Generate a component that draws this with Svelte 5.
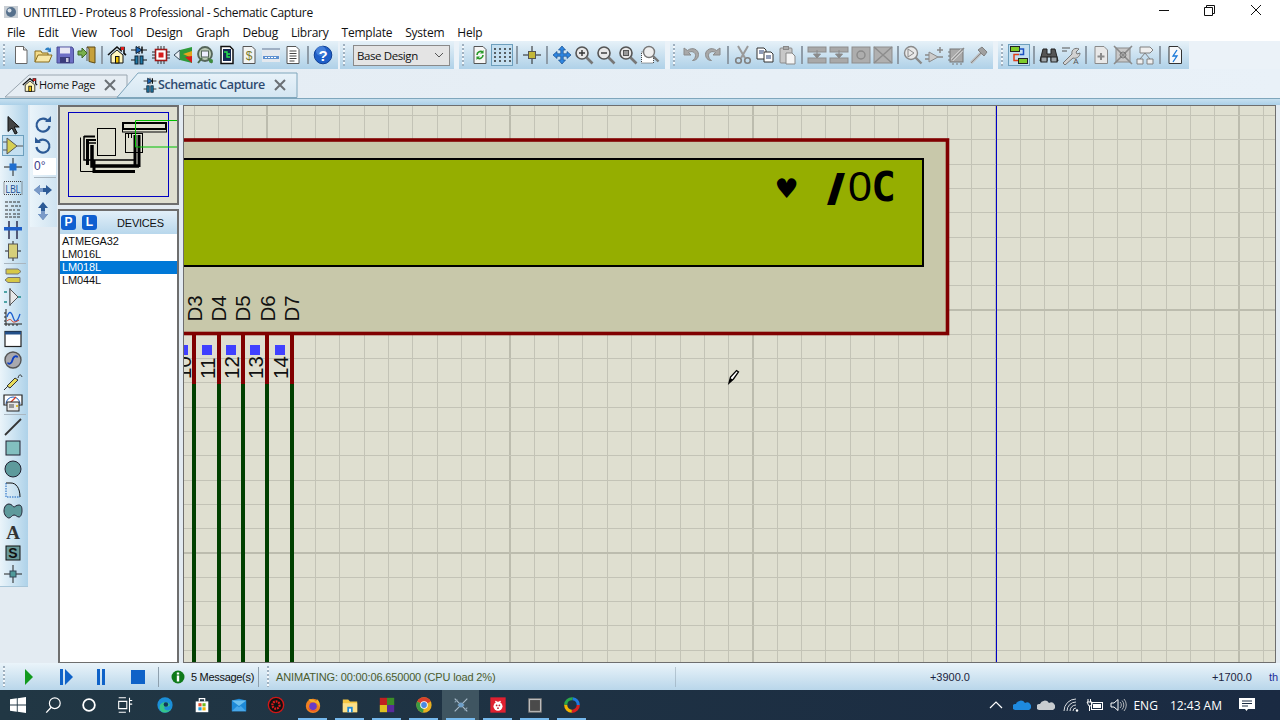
<script lang="ts">
  const ICONS: Record<string, string> = {
    new: `<path d="M4.5 1.5h8l3.5 3.5v13.5H4.5z" fill="#fff" stroke="#666"/><path d="M12.5 1.5v3.5H16" fill="#ddd" stroke="#666"/>`,
    open: `<path d="M2 17V6h6l1 2h6v3" fill="#f4dc8a" stroke="#8a6d1d"/><path d="M2 17l3-7h14l-3 7z" fill="#f8e8a8" stroke="#8a6d1d"/><path d="M12 5c1-3 4-3 5-1l1-2v5h-4l2-1c-1-1-3-1-4-1z" fill="#2d7fc4"/>`,
    save: `<path d="M2 2h15l1.500 2v14H2z" fill="#6d6fc4" stroke="#4b4d94"/><rect x="5" y="2.500" width="10" height="6" fill="#e8e8f4"/><rect x="5" y="12" width="10" height="6" fill="#3b3d7c"/><rect x="11" y="13" width="2.500" height="4" fill="#c9c9e0"/>`,
    import: `<path d="M10 2h8v16l-6-1.500V3.500z" fill="#c6a13c" stroke="#5c4a16"/><path d="M10 2v14" stroke="#555"/><path d="M1 6h4V3l5 5-5 5v-3H1z" fill="#79b04d" stroke="#3f6a25"/>`,
    home: `<path d="M1 10L10 2l4 3.500V2.500h3v6L19 10" fill="none" stroke="#111" stroke-width="1.600"/><rect x="14" y="2" width="3" height="3" fill="#e02020"/><path d="M4 10l6-5 6 5v8H4z" fill="#fff6c0" stroke="#111"/><rect x="8.500" y="11.500" width="3.500" height="6.500" fill="#f2c200" stroke="#111"/>`,
    schem: `<path d="M2 5h5M13 5h5M10 1v8" stroke="#111" fill="none"/><path d="M7 1.500v7l6-3.500z" fill="#1b66b8" stroke="#123"/><path d="M13 1.500v7" stroke="#111" stroke-width="1.500"/><path d="M2 15h4M14 15h4" stroke="#111"/><rect x="6" y="11" width="3" height="8" fill="#1f7aa8" stroke="#123"/><rect x="11" y="11" width="3" height="8" fill="#1f7aa8" stroke="#123"/>`,
    pcb: `<rect x="4.500" y="4.500" width="11" height="11" fill="#fff" stroke="#a11818" stroke-width="1.600"/><rect x="7.500" y="7.500" width="5" height="5" fill="#d81c1c"/><path d="M1 7h3M1 10h3M1 13h3M16 7h3M16 10h3M16 13h3M7 1v3M10 1v3M13 1v3M7 16v3M10 16v3M13 16v3" stroke="#333"/>`,
    view3d: `<path d="M1 10l6-5v10z" fill="#e8eef4" stroke="#3a4d5c"/><path d="M7 5l12-3v16l-12-3z" fill="#2f9a3a"/><path d="M10 9l9-3v7z" fill="#e6a51e"/><path d="M12 12l7-1v7z" fill="#d81c1c"/>`,
    gerber: `<circle cx="10" cy="9" r="7" fill="#b9c9b4" stroke="#55655a" stroke-width="1.800"/><rect x="6.500" y="6" width="7" height="6" fill="#eef" stroke="#55655a"/><path d="M3 18l4-5M17 18l-4-5" stroke="#4a6a4a" stroke-width="2"/><circle cx="16" cy="16" r="2" fill="#3d8c3d"/>`,
    bom: `<path d="M4 1.500h9l3 3v14H4z" fill="#fff" stroke="#111" stroke-width="1.500"/><rect x="6" y="4" width="8" height="12" fill="#152a52"/><path d="M7 7h3v5h3M10 9h3" fill="none" stroke="#27e34a" stroke-width="1.400"/>`,
    dollar: `<path d="M4 1.500h9l3 3v14H4z" fill="#f2f4f4" stroke="#555"/><text x="10" y="15" font-size="12" font-family="Liberation Sans" text-anchor="middle" fill="#7a7a2a">$</text>`,
    explorer: `<rect x="1" y="3" width="18" height="14" fill="#e4e8ee"/><rect x="1" y="3" width="18" height="2" fill="#9fb0c4"/><rect x="2" y="11" width="16" height="3" fill="#5f90d0"/><path d="M4 12.500h12" stroke="#fff" stroke-dasharray="2 1"/>`,
    notes: `<path d="M4 1.500h9l3 3v14H4z" fill="#fff" stroke="#555"/><path d="M6.500 6h7M6.500 8.500h7M6.500 11h7M6.500 13.500h7M6.500 16h5" stroke="#444"/>`,
    help: `<circle cx="10" cy="10" r="8.800" fill="#1f5fc8" stroke="#0f3f94"/><circle cx="8" cy="6" r="5" fill="#5f95e4" opacity=".6"/><text x="10" y="15.500" text-anchor="middle" font-size="15" font-weight="700" font-family="Liberation Sans" fill="#fff">?</text>`,
    refresh: `<path d="M4 1.500h9l3 3v14H4z" fill="#f6f6f6" stroke="#555"/><path d="M7 10a3.500 3.500 0 0 1 6-2.500M13 10a3.500 3.500 0 0 1-6 2.500" fill="none" stroke="#2a9a2a" stroke-width="1.600"/><path d="M13.500 5v3.500H10zM6.500 15v-3.500H10z" fill="#2a9a2a"/>`,
    grid: `<g fill="#222"><circle cx="3" cy="4" r=".9"/><circle cx="8" cy="4" r=".9"/><circle cx="13" cy="4" r=".9"/><circle cx="18" cy="4" r=".9"/><circle cx="3" cy="8" r=".9"/><circle cx="8" cy="8" r=".9"/><circle cx="13" cy="8" r=".9"/><circle cx="18" cy="8" r=".9"/><circle cx="3" cy="12" r=".9"/><circle cx="8" cy="12" r=".9"/><circle cx="13" cy="12" r=".9"/><circle cx="18" cy="12" r=".9"/><circle cx="3" cy="16" r=".9"/><circle cx="8" cy="16" r=".9"/><circle cx="13" cy="16" r=".9"/><circle cx="18" cy="16" r=".9"/></g>`,
    origin: `<path d="M10 1v18M1 10h18" stroke="#222"/><rect x="6.500" y="6.500" width="7" height="7" fill="#c4b83a" stroke="#555"/>`,
    move: `<path d="M10 1l3.500 4H11.200v3.800H15V6.500l4 3.500-4 3.500v-2.300h-3.800V15h2.300L10 19l-3.500-4h2.300v-3.800H5v2.300L1 10l4-3.500v2.300h3.800V5H6.500z" fill="#2f86e0" stroke="#144c8c" stroke-width=".7"/>`,
    zoomIn: `<circle cx="8" cy="8" r="6" fill="#e8e8e8" stroke="#555" stroke-width="1.600"/><path d="M5 8h6M8 5v6" stroke="#333" stroke-width="1.400"/><path d="M12.500 12.500l6 6" stroke="#777" stroke-width="2.600"/>`,
    zoomOut: `<circle cx="8" cy="8" r="6" fill="#e8e8e8" stroke="#555" stroke-width="1.600"/><path d="M5 8h6" stroke="#333" stroke-width="1.400"/><path d="M12.500 12.500l6 6" stroke="#777" stroke-width="2.600"/>`,
    zoomFit: `<circle cx="8" cy="8" r="6" fill="#e8e8e8" stroke="#555" stroke-width="1.600"/><rect x="5.500" y="5.500" width="5" height="5" fill="#999" stroke="#555"/><path d="M12.500 12.500l6 6" stroke="#777" stroke-width="2.600"/>`,
    zoomArea: `<rect x="1.500" y="7" width="12" height="11" fill="#fff" stroke="#444" stroke-dasharray="1 1"/><circle cx="9" cy="7" r="5.500" fill="#eee" stroke="#777" stroke-width="1.400"/><path d="M13 11l5.500 5.500" stroke="#777" stroke-width="2.400"/>`,
    undo: `<path d="M3 3v7h7l-2.500-2.500c3-2 7-.5 7 3 0 2-1 4-3 5 4 0 6-3 6-6 0-5-6-8-11-4z" fill="#a8a8a8" stroke="#8a8a8a"/>`,
    redo: `<path d="M17 3v7h-7l2.500-2.500c-3-2-7-.5-7 3 0 2 1 4 3 5-4 0-6-3-6-6 0-5 6-8 11-4z" fill="#a8a8a8" stroke="#8a8a8a"/>`,
    cut: `<path d="M5 1l7 12M15 1L8 13" stroke="#9a9a9a" stroke-width="2"/><circle cx="5.500" cy="15.500" r="2.800" fill="none" stroke="#808080" stroke-width="1.600"/><circle cx="14.500" cy="15.500" r="2.800" fill="none" stroke="#808080" stroke-width="1.600"/>`,
    copy: `<path d="M2 3h7l2 2v9H2z" fill="#fff" stroke="#333"/><path d="M9 7h7l2 2v8H9z" fill="#fff" stroke="#333"/><path d="M4 6h5M4 8h4M11 11h5M11 13h5" stroke="#223a70"/>`,
    paste: `<rect x="3" y="3" width="12" height="15" rx="1" fill="#c8c8c8" stroke="#8a8a8a"/><rect x="6.500" y="1.500" width="5" height="3" fill="#aaa" stroke="#888"/><path d="M9 8h6l3 3v8H9z" fill="#f4f4f4" stroke="#888"/>`,
    blockA: `<rect x="1" y="2" width="18" height="5" fill="#a9a9a9" stroke="#8d8d8d"/><rect x="1" y="13" width="18" height="5" fill="#a9a9a9" stroke="#8d8d8d"/><path d="M10 5v7M6.500 9l3.500 4 3.500-4z" fill="#8a8a8a" stroke="#8a8a8a"/>`,
    blockB: `<rect x="1" y="2" width="18" height="16" fill="#adadad" stroke="#8d8d8d"/><circle cx="10" cy="10" r="4" fill="none" stroke="#8a8a8a" stroke-width="1.400"/>`,
    blockC: `<rect x="1" y="2" width="18" height="16" fill="#b0b0b0" stroke="#8d8d8d"/><path d="M1 2l18 16M19 2L1 18" stroke="#8d8d8d" stroke-width="1.500"/>`,
    probe: `<circle cx="8" cy="8" r="6.500" fill="#e9e9e9" stroke="#8a8a8a" stroke-width="1.400"/><path d="M5 4v8l6-4z" fill="none" stroke="#8a8a8a"/><path d="M12.500 12.500l6 6" stroke="#8a8a8a" stroke-width="2.400"/>`,
    addAmp: `<path d="M4 7v10l9-5z" fill="#ccc" stroke="#8a8a8a"/><path d="M0 10h4M0 14h4M13 12h5M15 2v6M12 5h6" stroke="#8a8a8a" stroke-width="1.500"/>`,
    chipKey: `<rect x="3" y="4" width="13" height="13" fill="#aaa" stroke="#777"/><path d="M1 7h2M1 11h2M1 15h2M6 18v2M10 18v2M14 18v2" stroke="#777"/><path d="M5 15L15 5" stroke="#e8e8e8" stroke-width="3"/><path d="M5 15L17 3" stroke="#8a8a8a" stroke-width="1.400"/>`,
    hammer: `<path d="M2 18L12 8" stroke="#bbb" stroke-width="3"/><path d="M2 18L12 8" stroke="#8a8a8a" stroke-width="1"/><path d="M9 5l4-3 5 5-3 4z" fill="#a0a0a0" stroke="#808080"/>`,
    hier: `<rect x="1.500" y="1.500" width="9" height="5" fill="#7ecb2a" stroke="#222"/><rect x="9.500" y="13.500" width="9" height="5" fill="#7ecb2a" stroke="#222"/><path d="M10.500 4h4v5.500h-4" fill="none" stroke="#1b50c0" stroke-width="1.500"/><path d="M10 9.500H5v6h4" fill="none" stroke="#e0401a" stroke-width="1.500"/>`,
    binoc: `<path d="M4 4h4v5h4V4h4l3 12h-7v-4H8v4H1z" fill="#555" stroke="#222"/><rect x="2" y="12" width="6" height="5" fill="#9ca3a8" stroke="#222"/><rect x="12" y="12" width="6" height="5" fill="#9ca3a8" stroke="#222"/>`,
    wrench: `<path d="M2 18l9-9c-1-4 3-7 7-5l-3 3 1 2 3-1c0 4-4 6-7 5l-8 7z" fill="#d2d2d2" stroke="#777"/><path d="M1 3h8M1 6h5" stroke="#555"/><text x="15" y="19" font-size="8" text-anchor="middle" font-family="Liberation Sans" fill="#555">A</text>`,
    addSheet: `<path d="M4 1.500h9l3.500 3.500v13.500H4z" fill="#e8e8e8" stroke="#8a8a8a"/><path d="M10 8v7M6.500 11.500h7" stroke="#8a8a8a" stroke-width="2"/>`,
    delSheet: `<rect x="3" y="3" width="14" height="14" fill="#c8c8c8" stroke="#8a8a8a"/><path d="M1 1l18 18M19 1L1 19" stroke="#8a8a8a" stroke-width="1.600"/><circle cx="10" cy="10" r="3" fill="none" stroke="#777"/>`,
    tree: `<path d="M5 2h10l3 3-3 3H5zM2 14h6v5H2zM12 14h6v5h-6z" fill="#eee" stroke="#808080"/><path d="M10 8l-5 6M10 8l5 6" stroke="#808080"/>`,
    sheetBolt: `<path d="M4 1.500h9l3.500 3.500v13.500H4z" fill="#f6f8fa" stroke="#333"/><path d="M12 5l-4 6h4l-4 6" fill="none" stroke="#1878d8" stroke-width="1.300"/>`,
    select: `<path d="M5 1.500v15l4-3.500 3 6 2.200-1-3-6h5z" fill="#444" stroke="#111"/>`,
    comp: `<path d="M0 6h4M0 14h4M14 10h6" stroke="#555"/><path d="M4 2v16l10-8z" fill="#d6cf52" stroke="#555"/>`,
    junction: `<path d="M10 1v18M1 10h18" stroke="#222"/><rect x="6.500" y="6.500" width="7" height="7" fill="#1f6fd0"/>`,
    lbl: `<rect x="1" y="3.500" width="18" height="13" fill="none" stroke="#444" stroke-dasharray="1 1"/><text x="10" y="14.500" text-anchor="middle" font-size="10.500" font-family="Liberation Sans" fill="#1c4e94" textLength="15" lengthAdjust="spacingAndGlyphs">LBL</text>`,
    script: `<path d="M2 3h16M2 7h4M8 7h10M2 11h10M14 11h4M2 15h6M10 15h8M2 18h16" stroke="#333" stroke-dasharray="3 1"/>`,
    bus: `<path d="M6 1v18M14 1v18" stroke="#224" stroke-width="1.400"/><rect x="1" y="7" width="18" height="3.500" fill="#1f5fc8"/>`,
    sub: `<path d="M10 0v3M10 17v3M2 10h3M15 10h3" stroke="#222"/><rect x="5.500" y="3" width="9" height="14" fill="#d6cf7a" stroke="#555"/>`,
    terminal: `<path d="M3 3h12l3 2.500-3 2.500H3zM2 14l3-2.500h12v5H5z" fill="#d6c846" stroke="#777"/>`,
    port: `<path d="M1 5h3M1 15h3M15 10h3" stroke="#1e8a8a" stroke-width="1.500"/><path d="M7 1v18" stroke="#444"/><path d="M7 2l8 8-8 8z" fill="#e8e8e8" stroke="#555"/>`,
    graph: `<path d="M3 1v17M1 16h18M1 5h2M1 9h2M1 13h2M6 16v2M10 16v2M14 16v2" stroke="#222"/><path d="M4 9c2-6 4-6 6 0s4 6 7-3" fill="none" stroke="#1f60d0" stroke-width="1.300"/><path d="M4 13c2-2 4-2 5 0s4 1 7-1" fill="none" stroke="#d83a20"/>`,
    tape: `<rect x="2" y="2.500" width="16" height="15" fill="#fff" stroke="#222" stroke-width="1.200"/><rect x="2" y="2.500" width="16" height="3" fill="#23508a"/>`,
    gen: `<circle cx="10" cy="10" r="8" fill="#a9a9ae" stroke="#555" stroke-width="1.400"/><path d="M5 12.500c0 2 3.500 2 4.500-2.500s4.500-4.500 5-2.500" fill="none" stroke="#1040c0" stroke-width="1.800"/>`,
    vprobe: `<path d="M1 19l4-4" stroke="#333"/><path d="M4 15l8-8 3 2-8 8z" fill="#e8dc5a" stroke="#333"/><path d="M15 7c1-4 3-4 4-1" fill="none" stroke="#333"/>`,
    meter: `<path d="M1 3h18v10H1z" fill="#fff" stroke="#222" stroke-width="1.200"/><path d="M3 12a7 7 0 0 1 14 0" fill="none" stroke="#2060c0"/><path d="M6 12l7-7" stroke="#d83a20" stroke-width="1.200"/><rect x="4" y="10" width="12" height="9" fill="#e8e8e8" stroke="#222"/><path d="M6 13h5M6 15h5" stroke="#444"/><circle cx="14" cy="14" r="1" fill="#d8b000"/>`,
    line: `<path d="M2 18L18 2" stroke="#333" stroke-width="1.800"/>`,
    box: `<rect x="3" y="3" width="14" height="14" fill="#82bfbf" stroke="#223"/>`,
    circle: `<circle cx="10" cy="10" r="8" fill="#5e9a9c" stroke="#223"/>`,
    arc: `<path d="M3 3h5c5 0 9 5 9 14" fill="none" stroke="#111"/><path d="M3 3v14h14" fill="none" stroke="#1060c0" stroke-dasharray="1.500 1"/>`,
    path2d: `<path d="M6 3c3 0 4 3 5 3s2-2 5-2 3 4 3 6-1 6-3 6-3-2-5-2-3 3-5 3-5-3-5-7 2-7 5-7z" fill="#5e9a9c" stroke="#223"/>`,
    textA: `<text x="10" y="17" text-anchor="middle" font-size="19" font-weight="700" font-family="Liberation Serif" fill="#333">A</text>`,
    symbol: `<rect x="3" y="3" width="14" height="14" fill="#6a9a9a" stroke="#111"/><text x="10" y="15" text-anchor="middle" font-size="14" font-weight="700" font-family="Liberation Sans" fill="#111">S</text>`,
    marker: `<path d="M10 1v18M1 10h18" stroke="#222"/><rect x="7" y="7" width="6" height="6" fill="#4f9a9a" stroke="#345"/>`,
    rotCw: `<path d="M15.500 6.500A6.500 6.500 0 1 0 16.500 11" fill="none" stroke="#2c5a96" stroke-width="2.200"/><path d="M12 7h6V1z" fill="#2c5a96"/>`,
    rotCcw: `<path d="M4.500 6.500A6.500 6.500 0 1 1 3.500 11" fill="none" stroke="#2c5a96" stroke-width="2.200"/><path d="M8 7H2V1z" fill="#2c5a96"/>`,
    flipH: `<path d="M1 10l6-5v3h6V5l6 5-6 5v-3H7v3z" fill="#2c5a96"/><path d="M1 10l6-5v3h3v4H7v3z" fill="#7a9ac8"/>`,
    flipV: `<path d="M10 1l5 6h-3v6h3l-5 6-5-6h3V7H5z" fill="#2c5a96"/><path d="M10 19l-5-6h3v-3h4v3h3z" fill="#7a9ac8"/>`,
  };

  type Item = { i?: string; sep?: boolean; on?: boolean };
  const bar = (names: string) =>
    names.split(" ").map((n): Item =>
      n === "|" ? { sep: true } : n.endsWith("!") ? { i: n.slice(0, -1), on: true } : { i: n }
    );

  const topBars = [
    { cls: "g1", items: bar("new open save import | home schem pcb view3d gerber bom dollar explorer notes | help") },
    { cls: "g3", items: bar("refresh grid! | origin | move zoomIn zoomOut zoomFit zoomArea") },
    { cls: "g4", items: bar("undo redo | cut copy paste | blockA blockA blockB blockC | probe addAmp chipKey hammer") },
    { cls: "g5", items: bar("hier! | binoc wrench | addSheet delSheet tree | sheetBolt") },
  ];

  const menus = ["File", "Edit", "View", "Tool", "Design", "Graph", "Debug", "Library", "Template", "System", "Help"];
  const modes = bar("select comp! junction lbl script bus sub | terminal port graph tape gen vprobe meter | line box circle arc path2d textA symbol marker");
  const devices = ["ATMEGA32", "LM016L", "LM018L", "LM044L"];

  // grid of the editing window, screen coordinates
  const STEP = 24.3;
  const vLines = Array.from({ length: 46 }, (_, k) => 996 + (k - 33) * STEP).filter((x) => x > 184 && x < 1276);
  const hLines = Array.from({ length: 24 }, (_, k) => 310 + (k - 8) * STEP).filter((y) => y > 105 && y < 662);
  const isMajorV = (x: number) => Math.abs(((x - 996) / STEP) % 10) < 0.01;
  const isMajorH = (y: number) => Math.abs(((y - 310) / STEP) % 10) < 0.01;
  // 1px lines sit on a pixel centre, the 2px major ones on a pixel edge
  const snap = (v: number, major: boolean) => (major ? Math.round(v) : Math.floor(v) + 0.5);

  const pins = [194, 219, 243, 267, 292];
  const labels = [
    { t: "D3", x: 201.5 }, { t: "D4", x: 226 }, { t: "D5", x: 250 }, { t: "D6", x: 275 }, { t: "D7", x: 299 },
  ];
  const numbers = [
    { t: "10", x: 191 }, { t: "11", x: 215 }, { t: "12", x: 239 }, { t: "13", x: 263 }, { t: "14", x: 288 },
  ];
  const squares = [178, 202, 226, 250, 275];

  const taskIcons = [
    { x: "edge" }, { x: "store" }, { x: "mail" }, { x: "redc" }, { x: "fox", run: true }, { x: "files", run: true },
    { x: "cube", run: true }, { x: "chrome", run: true }, { x: "proteus", run: true, active: true },
    { x: "rasp", run: true }, { x: "tablet", run: true }, { x: "ring", run: true },
  ];
  const TASK: Record<string, string> = {
    edge: `<circle cx="10" cy="10" r="8.500" fill="#1b8fd8"/><path d="M4 12c0-5 8-7 11-3 1 2-1 3-4 3-3 0-2 4 2 4 2 0 3-1 4-2-2 5-9 6-12 2-1-1-1-3-1-4z" fill="#36c58a"/><circle cx="11" cy="9.500" r="2.500" fill="#12365c"/>`,
    store: `<path d="M3 6h14v12H3z" fill="#fff"/><path d="M7 6V3h6v3" fill="none" stroke="#fff" stroke-width="1.300"/><rect x="6" y="8" width="3.500" height="3.500" fill="#e8502a"/><rect x="10.500" y="8" width="3.500" height="3.500" fill="#70b820"/><rect x="6" y="12.500" width="3.500" height="3.500" fill="#1ea0e0"/><rect x="10.500" y="12.500" width="3.500" height="3.500" fill="#f4b400"/>`,
    mail: `<path d="M2 5l8-2 8 2v12H2z" fill="#1e8ad8"/><path d="M2 5l8 6 8-6" fill="#6cc0f0"/><path d="M2 17l6-6 2 1.500 2-1.500 6 6z" fill="#48a8ea"/>`,
    redc: `<circle cx="10" cy="10" r="8.500" fill="#111" stroke="#d01818" stroke-width="1.500"/><circle cx="10" cy="10" r="4" fill="none" stroke="#e01a1a" stroke-width="2.500" stroke-dasharray="2 1"/>`,
    fox: `<circle cx="10" cy="11" r="8" fill="#f08020"/><path d="M5 4c2 2 2 3 5 3 4 0 7 3 7 6 1-4 0-8-3-10 1 2 0 3-1 3-2-2-5-3-8-2z" fill="#f5b52a"/><circle cx="10" cy="11.500" r="4.200" fill="#6a3cc8"/><path d="M4 12c1 5 8 7 11 3-4 2-9 1-11-3z" fill="#e8442a"/>`,
    files: `<path d="M2 4h6l2 2h8v12H2z" fill="#f4c542"/><rect x="2" y="8" width="16" height="10" fill="#fbe08a"/><rect x="7" y="12" width="6" height="6" fill="#1e8ad8"/><rect x="9" y="14" width="2" height="4" fill="#fff"/>`,
    cube: `<rect x="2" y="2" width="8" height="8" fill="#c02020"/><rect x="10" y="2" width="8" height="8" fill="#3c8c28"/><rect x="2" y="10" width="8" height="8" fill="#e0c020"/><rect x="10" y="10" width="8" height="8" fill="#5a2a9a"/>`,
    chrome: `<circle cx="10" cy="10" r="8.500" fill="#e8b020"/><path d="M10 10L2.500 6A8.500 8.500 0 0 1 17.500 6z" fill="#d8402c"/><path d="M10 10l-7.500-4A8.500 8.500 0 0 0 9 18.500z" fill="#3a9a44"/><circle cx="10" cy="10" r="4.200" fill="#fff"/><circle cx="10" cy="10" r="3.200" fill="#4a88e0"/>`,
    proteus: `<path d="M3 3l14 14M17 3L3 17" stroke="#a9bccb" stroke-width="1.300"/><path d="M6 10l4-3 4 3-4 3z" fill="#6f9fc8"/><path d="M3 7l3-3M14 16l3-3" stroke="#8ba2b4" stroke-width="1.300"/>`,
    rasp: `<rect x="1.500" y="1.500" width="17" height="17" fill="#e02030"/><circle cx="10" cy="11.500" r="5" fill="#fff"/><circle cx="8.500" cy="10.500" r="1" fill="#c02030"/><circle cx="11.500" cy="10.500" r="1" fill="#c02030"/><circle cx="10" cy="13.500" r="1" fill="#c02030"/><path d="M7 6l3 1.500L13 6" stroke="#fff" stroke-width="1.500" fill="none"/>`,
    tablet: `<rect x="3" y="3" width="14" height="15" fill="#c8c8c8" stroke="#777"/><rect x="4.500" y="4.500" width="11" height="12" fill="#4a4a4a"/>`,
    ring: `<circle cx="10" cy="10" r="7" fill="none" stroke="#d82020" stroke-width="3.500" stroke-dasharray="11 33" stroke-dashoffset="0"/><circle cx="10" cy="10" r="7" fill="none" stroke="#f4b400" stroke-width="3.500" stroke-dasharray="11 33" stroke-dashoffset="-11"/><circle cx="10" cy="10" r="7" fill="none" stroke="#2aa84a" stroke-width="3.500" stroke-dasharray="11 33" stroke-dashoffset="-22"/><circle cx="10" cy="10" r="7" fill="none" stroke="#1f7ae0" stroke-width="3.500" stroke-dasharray="11 33" stroke-dashoffset="-33"/>`,
  };
</script>

<div class="shell">
  <header class="titlebar">
    <svg class="app-logo" viewBox="0 0 16 16"><rect x="1" y="2" width="14" height="12" fill="#c8ced4" /><circle cx="8" cy="8" r="5" fill="#56708c" /><circle cx="6.500" cy="6.500" r="2" fill="#d8e0e8" /></svg>
    <span class="title">UNTITLED - Proteus 8 Professional - Schematic Capture</span>
    <div class="win-btns">
      <svg viewBox="0 0 46 24"><path d="M17 10.500h10" stroke="#111" /></svg>
      <svg viewBox="0 0 46 24"><path d="M18.500 7.500v-2h8v8h-2M16.500 7.500h8v8h-8z" fill="none" stroke="#111" /></svg>
      <svg viewBox="0 0 46 24"><path d="M17 5l10 10M27 5L17 15" stroke="#111" /></svg>
    </div>
  </header>

  <nav class="menubar">
    {#each menus as m}<span>{m}</span>{/each}
  </nav>

  <div class="toolband">
    {#each topBars as tb, n}
      <div class="toolbar {tb.cls}">
        {#each tb.items as it}
          {#if it.sep}
            <i class="sep"></i>
          {:else}
            <span class="tool" class:on={it.on}><svg viewBox="0 0 20 20">{@html ICONS[it.i ?? ""]}</svg></span>
          {/if}
        {/each}
      </div>
      {#if n === 0}
        <div class="toolbar g2">
          <div class="combo">Base Design<svg viewBox="0 0 12 8"><path d="M2 2l4 4 4-4" fill="none" stroke="#555" /></svg></div>
        </div>
      {/if}
    {/each}
  </div>

  <div class="tabstrip">
    <svg class="tab-shapes" viewBox="0 0 1280 29">
      <path d="M5 28L29 6h98v12l-10 10z" fill="#e6edf3" stroke="#9aa6b0" />
      <path d="M117 28.500L138 4h159v24.500z" fill="url(#tabfill)" stroke="#7fa6bc" />
      <defs>
        <linearGradient id="tabfill" x1="0" x2="0" y1="0" y2="1"><stop offset="0" stop-color="#e8f2f9" /><stop offset="1" stop-color="#d4e6f2" /></linearGradient>
      </defs>
    </svg>
    <span class="tab home">
      <svg viewBox="0 0 20 20">{@html ICONS.home}</svg>
      <span>Home Page</span>
      <svg class="x" viewBox="0 0 14 14"><path d="M2 2l10 10M12 2L2 12" stroke="#6a6f74" stroke-width="2" /></svg>
    </span>
    <span class="tab active">
      <svg viewBox="0 0 20 20">{@html ICONS.schem}</svg>
      <span>Schematic Capture</span>
      <svg class="x" viewBox="0 0 14 14"><path d="M2 2l10 10M12 2L2 12" stroke="#6a6f74" stroke-width="2" /></svg>
    </span>
  </div>
  <div class="tabfoot"></div>

  <main class="body">
    <div class="modebar">
      {#each modes as it}
        {#if it.sep}
          <i class="hsep"></i>
        {:else}
          <span class="mode" class:on={it.on}><svg viewBox="0 0 20 20">{@html ICONS[it.i ?? ""]}</svg></span>
        {/if}
      {/each}
    </div>

    <div class="orient">
      <span class="mode"><svg viewBox="0 0 20 20">{@html ICONS.rotCw}</svg></span>
      <span class="mode"><svg viewBox="0 0 20 20">{@html ICONS.rotCcw}</svg></span>
      <div class="angle">0°</div>
      <i class="hsep"></i>
      <span class="mode"><svg viewBox="0 0 20 20">{@html ICONS.flipH}</svg></span>
      <span class="mode"><svg viewBox="0 0 20 20">{@html ICONS.flipV}</svg></span>
    </div>

    <aside class="side">
      <div class="overview">
        <svg viewBox="60 107 118 96" width="118" height="96">
          <rect x="68.500" y="112.500" width="100" height="84" fill="none" stroke="#0000c0" />
          <rect x="122.500" y="122.500" width="44" height="9.500" fill="none" stroke="#000" />
          <rect x="123" y="123" width="43" height="6" fill="none" stroke="#000" stroke-width="2" />
          <rect x="97.500" y="128.500" width="18" height="27" fill="none" stroke="#000" />
          <rect x="125.500" y="133.500" width="17" height="19" fill="none" stroke="#000" />
          <g fill="none" stroke="#000">
            <path d="M80.500 137.500V171.500H135" />
            <path d="M84 136v24h52" stroke-width="1.500" />
            <path d="M84 136.500h11M86 140h10" stroke-width="2" />
            <path d="M86 143h10" stroke-width="1.500" />
            <path d="M87.500 140v25" stroke-width="3" />
            <path d="M92 145v21h47" stroke-width="3.500" />
            <path d="M94 160v11.500h41" stroke-width="3" />
            <path d="M135 135v32M139 135v32" stroke-width="3" />
            <path d="M125.500 138v-4M128.500 138v-4M131.500 138v-4" />
          </g>
          <path d="M178 120.500h-42.500V147H178" fill="none" stroke="#00c000" />
        </svg>
      </div>
      <div class="devices">
        <div class="dev-head">
          <span class="pill">P</span><span class="pill">L</span><span class="dev-title">DEVICES</span>
        </div>
        <ul>
          {#each devices as d, n}<li class:sel={n === 2}>{d}</li>{/each}
        </ul>
      </div>
    </aside>

    <div class="canvas">
      <svg viewBox="184 106 1091 556" width="1091" height="556">
        <rect x="184" y="106" width="1091" height="556" fill="#dfdfd0" />
        {#each vLines as x}
          <line x1={snap(x, isMajorV(x))} x2={snap(x, isMajorV(x))} y1="105" y2="662" class:major={isMajorV(x)} />
        {/each}
        {#each hLines as y}
          <line x1="184" x2="1276" y1={snap(y, isMajorH(y))} y2={snap(y, isMajorH(y))} class:major={isMajorH(y)} />
        {/each}
        <line class="origin" x1="996.500" x2="996.500" y1="105" y2="662" />

        {#each pins as x}
          <rect x={x - 2} y="334" width="4" height="50" fill="#800000" />
          <rect x={x - 2} y="384" width="4" height="278" fill="#004000" />
        {/each}
        {#each squares as x}
          <rect {x} y="345" width="10" height="10" fill="#4040ff" />
        {/each}
        {#each numbers as n}
          <text class="pin" transform="translate({n.x} 379) rotate(-90)">{n.t}</text>
        {/each}

        <rect x="170" y="140" width="777.500" height="193.500" fill="#c8c8aa" stroke="#800000" stroke-width="3.600" />
        <rect x="170" y="159" width="753" height="107" fill="#95ae00" stroke="#000" stroke-width="2" />
        {#each labels as l}
          <text class="pin" transform="translate({l.x} 321.500) rotate(-90)">{l.t}</text>
        {/each}

        <text class="lcd heart" x="786.500" y="198">♥</text>
        <text class="lcd slash" x="836" y="200">/</text>
        <text class="lcd zero" x="860" y="201">0</text>
        <text class="lcd brk" x="883.500" y="201">C</text>

        <path d="M729 383l1.500-6 6-6.500 2 1.500-5 7z" fill="#fff" stroke="#000" stroke-width="1.300" />
        <path d="M729 383l1.500-5 2 1.500z" fill="#000" />
      </svg>
    </div>
  </main>

  <footer class="status">
    <span class="grip"></span>
    <svg class="sim" viewBox="0 0 14 18" style="margin-left:17px"><path d="M3 1l8 8-8 8z" fill="#129a1e" /></svg>
    <svg class="sim" viewBox="0 0 14 18" style="margin-left:23px"><path d="M1 1h3v16H1z" fill="#0f62c8" /><path d="M6 1l8 8-8 8z" fill="#0f62c8" /></svg>
    <svg class="sim" viewBox="0 0 14 18" style="margin-left:21px"><path d="M3 1h3v16H3zM8 1h3v16H8z" fill="#0f62c8" /></svg>
    <svg class="sim" viewBox="0 0 14 18" style="margin-left:23px"><rect x="0" y="2" width="14" height="14" fill="#0f62c8" /></svg>
    <i class="st-sep" style="margin-left:13px"></i>
    <svg class="info" viewBox="0 0 14 14"><circle cx="7" cy="7" r="6.500" fill="#0f7a1a" /><rect x="5.800" y="5.500" width="2.400" height="6" fill="#fff" /><rect x="5.800" y="2.500" width="2.400" height="2" fill="#fff" /></svg>
    <span class="msg">5 Message(s)</span>
    <i class="st-sep" style="margin-left:4px"></i>
    <span class="grip2"></span>
    <span class="anim">ANIMATING: 00:00:06.650000 (CPU load 2%)</span>
    <i class="st-sep" style="margin-left:181px;opacity:.5"></i>
    <span class="coord" style="width:294px">+3900.0</span>
    <span class="coord" style="width:282px">+1700.0</span>
    <span class="unit">th</span>
  </footer>

  <div class="taskbar">
    <svg class="winlogo" viewBox="0 0 16 16"><path d="M0 2.300L6.800 1.300V7.600H0zM7.700 1.200L16 0V7.600H7.700zM0 8.400H6.800V14.700L0 13.700zM7.700 8.400H16V16L7.700 14.800z" fill="#fff" /></svg>
    <svg class="tsk" viewBox="0 0 20 20"><circle cx="12" cy="8" r="6" fill="none" stroke="#fff" stroke-width="1.300" /><path d="M8 12.500L2.500 18.500" stroke="#fff" stroke-width="1.500" /></svg>
    <svg class="tsk" viewBox="0 0 20 20"><circle cx="10" cy="10" r="6.500" fill="none" stroke="#fff" stroke-width="2" /></svg>
    <svg class="tsk" viewBox="0 0 20 20"><path d="M3 2h8M3 18h8M3 6h9v8H3zM15 2v16M18 5h-3v4h3" fill="none" stroke="#fff" stroke-width="1.200" /></svg>
    <div class="apps">
      {#each taskIcons as t}
        <span class="app" class:run={t.run} class:active={t.active}><svg viewBox="0 0 20 20">{@html TASK[t.x]}</svg></span>
      {/each}
    </div>
    <div class="tray">
      <svg style="width:14px" viewBox="0 0 14 14"><path d="M1 10l6-6 6 6" fill="none" stroke="#fff" stroke-width="1.200" /></svg>
      <svg style="width:18px;margin-left:10px" viewBox="0 0 18 14"><path d="M2 12a3 3 0 0 1 1-6 5 5 0 0 1 9-1 3.500 3.500 0 0 1 4 7z" fill="#1e8ae0" /></svg>
      <svg style="width:18px;margin-left:6px" viewBox="0 0 18 14"><path d="M2 12a3 3 0 0 1 1-6 5 5 0 0 1 9-1 3.500 3.500 0 0 1 4 7z" fill="#c8ccd0" /></svg>
      <svg style="width:16px;margin-left:8px" viewBox="0 0 16 14"><path d="M1 13A12 12 0 0 1 13 1M4 13a9 9 0 0 1 9-9M7 13a6 6 0 0 1 6-6M10 13a3 3 0 0 1 3-3" fill="none" stroke="#d8dce0" /><circle cx="14" cy="12.500" r="1.200" fill="#fff" /></svg>
      <svg style="width:18px;margin-left:7px" viewBox="0 0 18 14"><rect x="5.500" y="4.500" width="11" height="7" fill="none" stroke="#fff" /><rect x="7" y="6" width="8" height="4" fill="#fff" /><path d="M2 1v3M4.500 1v3M1 4h5v2a2 2 0 0 1-4 0zM3.500 8v5" stroke="#fff" fill="none" /></svg>
      <svg style="width:17px;margin-left:6px" viewBox="0 0 17 14"><path d="M1 5h3l4-3.500v11L4 9H1z" fill="none" stroke="#fff" /><path d="M10 4a4 4 0 0 1 0 6M12 2.500a6.500 6.500 0 0 1 0 9M14 1a9 9 0 0 1 0 12" fill="none" stroke="#b0b4b8" /></svg>
      <span class="lang">ENG</span>
      <span class="clock">12:43 AM</span>
      <svg style="width:16px;margin-left:17px" viewBox="0 0 16 16"><path d="M0 1h16v11H9l-1.500 2L6 12H0z" fill="#fff" /><path d="M3 4h10M3 6.500h10M3 9h6" stroke="#1c2c42" /></svg>
    </div>
  </div>
</div>

<style>
  :global(body) {
    margin: 0;
    background: #fff;
  }

  .shell {
    width: 1280px;
    height: 720px;
    display: flex;
    flex-direction: column;
    overflow: hidden;
    font-family: "Open Sans", "Noto Sans", sans-serif;
    font-size: 12px;
    color: #111;
  }

  svg {
    display: block;
    flex: none;
  }

  .titlebar {
    height: 24px;
    display: flex;
    align-items: center;
    background: #fff;
    flex: none;
  }

  .app-logo {
    width: 16px;
    height: 16px;
    margin-left: 3px;
  }

  .title {
    margin-left: 4px;
    font-size: 12px;
    letter-spacing: -0.32px;
  }

  .win-btns {
    margin-left: auto;
    display: flex;
    margin-top: -1px;
  }

  .win-btns svg {
    width: 46px;
    height: 24px;
  }

  .menubar {
    height: 17px;
    flex: none;
    display: flex;
    padding-left: 7px;
    gap: 13px;
    align-items: center;
    background: #fff;
    font-size: 12px;
    letter-spacing: -0.23px;
  }

  .toolband {
    height: 28px;
    flex: none;
    display: flex;
    background: #ebf2f8;
  }

  .toolbar {
    position: relative;
    display: flex;
    align-items: center;
    padding: 0 3px 0 10px;
    height: 28px;
    background: linear-gradient(#e6f1f8, #afd1e8);
  }

  .toolbar::before {
    content: "";
    position: absolute;
    left: 3px;
    top: 3px;
    bottom: 3px;
    width: 2px;
    background: repeating-linear-gradient(#9fb0bf 0 2px, #f4f8fb 2px 4px);
  }

  .g1 {
    width: 338px;
    box-sizing: border-box;
  }

  .g2 {
    margin-left: 2px;
    width: 114px;
    box-sizing: border-box;
    padding-left: 13px;
  }

  .g3 {
    margin-left: 5px;
    padding-right: 4px;
  }

  .g4,
  .g5 {
    margin-left: 5px;
  }

  .tool {
    width: 22px;
    height: 22px;
    box-sizing: border-box;
    display: flex;
    align-items: center;
    justify-content: center;
  }

  .tool svg {
    width: 20px;
    height: 20px;
  }

  .tool.on {
    background: #c4dff0;
    outline: 1px solid #6d9fbd;
    outline-offset: -1px;
  }

  .sep {
    width: 8px;
    height: 18px;
    background: linear-gradient(#8e9ca8, #8e9ca8) center / 2px 18px no-repeat;
  }

  .combo {
    width: 97px;
    height: 21px;
    box-sizing: border-box;
    display: flex;
    align-items: center;
    justify-content: space-between;
    padding: 0 4px 0 3px;
    background: #e4e4e4;
    border: 1px solid #8a8a8a;
    font-size: 11.500px;
    letter-spacing: -0.4px;
  }

  .combo svg {
    width: 12px;
    height: 8px;
  }

  .tabstrip {
    position: relative;
    height: 29px;
    flex: none;
    display: flex;
    background: linear-gradient(90deg, #e4ecf3, #e9f1f8);
  }

  .tab-shapes {
    position: absolute;
    inset: 0;
  }

  .tab {
    position: relative;
    display: flex;
    align-items: center;
    padding-top: 2px;
  }

  .tab svg {
    width: 16px;
    height: 16px;
  }

  .tab .x {
    width: 14px;
    height: 14px;
  }

  .tab.home {
    margin-left: 22px;
    width: 100px;
  }

  .tab.home span {
    margin-left: 1px;
    font-size: 11px;
    letter-spacing: -0.3px;
    width: 64px;
    white-space: nowrap;
  }

  .tab.active {
    margin-left: 20px;
    color: #2e4a70;
  }

  .tab.active span {
    margin: 0 8px 0 0;
    font-size: 12.500px;
    font-weight: 600;
    letter-spacing: -0.4px;
    width: 107px;
    white-space: nowrap;
  }

  .tabfoot {
    height: 7px;
    flex: none;
    border-top: 1px solid #7fa6bc;
    box-sizing: border-box;
    background: linear-gradient(#c6e0f0, #abd0e8);
  }

  .body {
    flex: 1;
    min-height: 0;
    display: flex;
    background: #e3ebf2;
  }

  .modebar {
    width: 28px;
    height: 482px;
    box-sizing: border-box;
    padding-top: 9px;
    flex: none;
    display: flex;
    flex-direction: column;
    background: linear-gradient(90deg, #eaf4fa, #aed2e9);
    border-bottom: 1px solid #a8c6d9;
  }

  .orient {
    width: 27px;
    height: 122px;
    margin-left: 2px;
    box-sizing: border-box;
    padding-top: 9px;
    flex: none;
    display: flex;
    flex-direction: column;
    background: linear-gradient(90deg, #eaf4fa, #cfe3f1);
  }

  .mode {
    width: 26px;
    height: 21px;
    box-sizing: border-box;
    flex: none;
    display: flex;
    align-items: center;
    justify-content: center;
  }

  .mode svg {
    width: 20px;
    height: 20px;
  }

  .mode.on {
    background: #c4dff0;
    outline: 1px solid #6d9fbd;
    outline-offset: -1px;
    width: 22px;
    margin-left: 2px;
  }

  .hsep {
    display: block;
    flex: none;
    width: 22px;
    height: 4px;
    margin-left: 4px;
    background: linear-gradient(#a9b6c0, #a9b6c0) center / 22px 1px no-repeat;
  }

  .angle {
    width: 23px;
    height: 17px;
    margin: 2px 0 0 3px;
    background: #fff;
    color: #3a3a88;
    font: 12px "Liberation Sans", sans-serif;
    line-height: 17px;
    padding-left: 1px;
    box-sizing: border-box;
    flex: none;
  }

  .side {
    width: 121px;
    margin-left: 1px;
    flex: none;
    display: flex;
    flex-direction: column;
    gap: 4px;
  }

  .overview {
    height: 100px;
    box-sizing: border-box;
    border: 2px solid #6e6e6e;
    background: #dfdfd0;
    overflow: hidden;
  }

  .devices {
    flex: 1;
    min-height: 0;
    display: flex;
    flex-direction: column;
    border: 2px solid #6e6e6e;
    border-bottom-width: 1px;
    background: #fff;
  }

  .dev-head {
    height: 23px;
    flex: none;
    display: flex;
    align-items: center;
    padding-left: 1px;
    background: linear-gradient(#e2eff8, #b8d7ec);
    font: 11px "Liberation Sans", sans-serif;
  }

  .pill {
    width: 15px;
    height: 15px;
    margin-right: 6px;
    border-radius: 3px;
    background: #0f5fd0;
    color: #fff;
    font: 700 12px/15px "Liberation Sans", sans-serif;
    text-align: center;
  }

  .dev-title {
    margin-left: 14px;
    letter-spacing: -0.2px;
  }

  ul {
    list-style: none;
    margin: 1px 0 0;
    padding: 0;
    font: 11px/13px "Liberation Sans", sans-serif;
  }

  li {
    height: 13px;
    padding-left: 2px;
    letter-spacing: -0.15px;
  }

  li.sel {
    background: #0078d7;
    color: #fff;
  }

  .canvas {
    margin-left: 4px;
    width: 1093px;
    box-sizing: border-box;
    flex: none;
    border: 1px solid #6e6e6e;
    background: #dfdfd0;
    overflow: hidden;
  }

  line {
    stroke: #c3c3b6;
    stroke-width: 1;
    shape-rendering: crispEdges;
  }

  line.major {
    stroke: #bcbcae;
    stroke-width: 2;
  }

  line.origin {
    stroke: #0000c8;
  }

  .pin {
    font: 20.500px "Liberation Sans", sans-serif;
    fill: #111;
  }

  .lcd {
    text-anchor: middle;
    fill: #000;
  }

  .heart {
    font: 27px "DejaVu Sans", sans-serif;
  }

  .slash {
    font: 700 34px "DejaVu Sans", sans-serif;
    stroke: #000;
    stroke-width: 4;
  }

  .zero {
    font: 43px "Liberation Sans", sans-serif;
  }

  .brk {
    font: 700 41px "DejaVu Sans Mono", monospace;
  }

  .status {
    height: 27px;
    flex: none;
    position: relative;
    display: flex;
    align-items: center;
    background: linear-gradient(#eaf4fa, #b9d6ea);
    font: 11px "Liberation Sans", sans-serif;
  }

  .grip,
  .grip2 {
    width: 2px;
    height: 21px;
    flex: none;
    background: repeating-linear-gradient(#9fb0bf 0 2px, #f4f8fb 2px 4px);
  }

  .grip {
    margin-left: 3px;
  }

  .grip2 {
    margin-left: 8px;
  }

  .sim {
    width: 14px;
    height: 18px;
  }

  .st-sep {
    width: 1px;
    height: 20px;
    background: #8ea0ae;
    flex: none;
  }

  .info {
    width: 14px;
    height: 14px;
    margin-left: 12px;
  }

  .msg {
    margin-left: 6px;
    width: 63px;
    letter-spacing: -0.3px;
    white-space: nowrap;
  }

  .anim {
    margin-left: 7px;
    width: 218px;
    color: #4c5c2c;
    letter-spacing: -0.15px;
    white-space: nowrap;
  }

  .coord {
    text-align: right;
    color: #1c2440;
    flex: none;
  }

  .unit {
    margin-left: 17px;
    color: #1c2f9a;
  }

  .taskbar {
    height: 30px;
    flex: none;
    display: flex;
    align-items: center;
    background: linear-gradient(90deg, #213744, #1a2a42);
  }

  .winlogo {
    width: 16px;
    height: 16px;
    margin-left: 10px;
  }

  .tsk {
    width: 18px;
    height: 18px;
    margin-left: 18px;
  }

  .apps {
    display: flex;
    margin-left: 12px;
    height: 30px;
  }

  .app {
    width: 37px;
    height: 30px;
    box-sizing: border-box;
    display: flex;
    align-items: center;
    justify-content: center;
    position: relative;
  }

  .app svg {
    width: 18px;
    height: 18px;
  }

  .app.active {
    background: #3f5561;
  }

  .app.run::after {
    content: "";
    position: absolute;
    left: 4px;
    right: 4px;
    bottom: 0;
    height: 2px;
    background: #76b9ed;
  }

  .tray {
    margin-left: auto;
    display: flex;
    align-items: center;
    color: #fff;
    padding-right: 25px;
  }

  .lang {
    margin-left: 6px;
    font-size: 12px;
  }

  .clock {
    margin-left: 12px;
    font-size: 12px;
  }
</style>
